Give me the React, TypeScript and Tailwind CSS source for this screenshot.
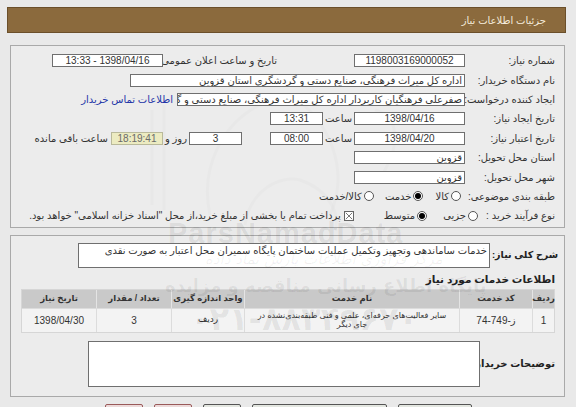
import React from "react";

const Box = ({ w, children, align = "center", className = "" }: { w: string; children?: React.ReactNode; align?: "center" | "right"; className?: string }) => (
  <div
    className={`${w} h-[13px] shrink-0 bg-white border border-[#6f6f6f] text-[10px] leading-[11px] text-[#333] overflow-hidden whitespace-nowrap ${align === "center" ? "text-center" : "text-right pr-[2px]"} ${className}`}
  >
    {children}
  </div>
);

const Label = ({ w, children, className = "" }: { w: string; children: React.ReactNode; className?: string }) => (
  <div className={`${w} shrink-0 text-[10px] text-[#333] whitespace-nowrap ${className}`}>{children}</div>
);

const Row = ({ children }: { children: React.ReactNode }) => (
  <div className="flex items-center h-[19.4px]">{children}</div>
);

const Radio = ({ checked = false }: { checked?: boolean }) => (
  <div className="w-[10px] h-[10px] shrink-0 rounded-full border border-[#555] bg-white flex items-center justify-center">
    {checked && <div className="w-[6px] h-[6px] rounded-full bg-black" />}
  </div>
);

export default function App() {
  return (
    <div
      dir="rtl"
      className="relative w-[576px] h-[407px] overflow-hidden bg-[#e9e9e9] font-['Liberation_Sans','DejaVu_Sans',sans-serif] text-[#333]"
    >
      {/* watermark logo (behind) */}
      <div className="pointer-events-none absolute inset-0 z-0">
        <svg className="absolute left-0 top-0" width="576" height="407" viewBox="0 0 576 407">
          <g fill="none" stroke="#000" strokeOpacity="0.08" strokeWidth="3">
            <path d="M152 110 L152 205 M164 105 L164 210" />
            <path d="M210 215 C200 170 220 120 270 100" />
            <path d="M330 215 C350 170 330 120 290 95" />
            <path d="M245 225 C250 190 280 175 300 180 C330 190 340 215 335 230" />
            <path d="M375 110 C395 115 400 135 390 160 L380 180" />
          </g>
        </svg>
      </div>

      <div className="relative z-10 pt-[7px]">
        {/* header */}
        <div className="mr-[10px] ml-[7px] h-[26px] bg-[#8b6a3d] border border-[#6b4f2a] flex items-center pr-[19px]">
          <span className="text-[10px] text-[#f4ecdc]">جزئیات اطلاعات نیاز</span>
        </div>

        {/* panel 1 */}
        <div className="mt-[12px] mr-[11px] ml-[10px] border border-[#a9a9a9] bg-[#ececec]/80 pt-[5px] pb-[1px] pr-[9px]">
          <Row>
            <Label w="w-[90px]">شماره نیاز:</Label>
            <Box w="w-[111px]">1198003169000052</Box>
            <Label w="w-[110px]" className="mr-[77px] text-[9.5px]">تاریخ و ساعت اعلان عمومی:</Label>
            <Box w="w-[111px]" className="mr-[4px]">1398/04/16 - 13:33</Box>
          </Row>
          <Row>
            <Label w="w-[90px]">نام دستگاه خریدار:</Label>
            <Box w="w-[335px]" align="right">اداره کل میراث فرهنگی، صنایع دستی و گردشگری استان قزوین</Box>
          </Row>
          <Row>
            <Label w="w-[90px]" className="text-[9.5px]">ایجاد کننده درخواست:</Label>
            <Box w="w-[288px]" align="right">صفرعلی فرهنگیان کاربردار اداره کل میراث فرهنگی، صنایع دستی و گردشگری ا</Box>
            <span className="mr-[4px] text-[10px] text-[#2436a8] whitespace-nowrap">اطلاعات تماس خریدار</span>
          </Row>
          <Row>
            <Label w="w-[90px]">تاریخ ایجاد نیاز:</Label>
            <Box w="w-[111px]">1398/04/16</Box>
            <Label w="w-[31px]" className="text-center">ساعت</Label>
            <Box w="w-[53px]">13:31</Box>
          </Row>
          <Row>
            <Label w="w-[90px]">تاریخ اعتبار نیاز:</Label>
            <Box w="w-[111px]">1398/04/20</Box>
            <Label w="w-[31px]" className="text-center">ساعت</Label>
            <Box w="w-[53px]">08:00</Box>
            <Box w="w-[53px]" className="mr-[28px]">3</Box>
            <Label w="w-[26px]" className="text-center">روز و</Label>
            <div className="w-[52px] h-[13px] shrink-0 bg-[#ecebc1] border border-[#b9b99a] text-[10px] leading-[11px] text-center text-[#6a6a6a]">18:19:41</div>
            <Label w="w-auto" className="mr-[3px]">ساعت باقی مانده</Label>
          </Row>
          <Row>
            <Label w="w-[90px]">استان محل تحویل:</Label>
            <Box w="w-[111px]" align="right">قزوین</Box>
          </Row>
          <Row>
            <Label w="w-[90px]">شهر محل تحویل:</Label>
            <Box w="w-[111px]" align="right">قزوین</Box>
          </Row>
          <Row>
            <Label w="w-[94px]" className="text-[9.5px]">طبقه بندی موضوعی:</Label>
            <Radio />
            <Label w="w-auto" className="mr-[2px]">کالا</Label>
            <div className="mr-[12px]"><Radio checked /></div>
            <Label w="w-auto" className="mr-[2px]">خدمت</Label>
            <div className="mr-[11px]"><Radio /></div>
            <Label w="w-auto" className="mr-[2px]">کالا/خدمت</Label>
          </Row>
          <Row>
            <Label w="w-[77px]" className="text-[9.5px]">نوع فرآیند خرید :</Label>
            <Radio />
            <Label w="w-auto" className="mr-[2px]">جزیی</Label>
            <div className="mr-[16px]"><Radio checked /></div>
            <Label w="w-auto" className="mr-[2px]">متوسط</Label>
            <div className="mr-[30px] w-[10px] h-[10px] shrink-0 border border-[#666] bg-white">
              <svg viewBox="0 0 10 10" className="w-full h-full block">
                <path d="M1 1 L9 9 M9 1 L1 9" stroke="#555" strokeWidth="1" />
              </svg>
            </div>
            <Label w="w-auto" className="mr-[3px]">پرداخت تمام یا بخشی از مبلغ خرید،از محل "اسناد خزانه اسلامی" خواهد بود.</Label>
          </Row>
        </div>

        {/* panel 2 */}
        <div className="mt-[7px] mr-[11px] ml-[10px] h-[162px] border border-[#a9a9a9] bg-[#ececec]/80 pt-[7px] pr-[6px]">
          <div className="flex items-center">
            <div className="w-[68px] shrink-0 text-[9.5px] font-bold text-[#222] whitespace-nowrap">شرح کلی نیاز:</div>
            <div className="w-[412px] h-[25px] shrink-0 bg-white border border-[#6f6f6f] text-[10px] leading-[14px] pr-[2px] text-right whitespace-nowrap overflow-hidden">
              خدمات ساماندهی وتجهیز وتکمیل عملیات ساختمان پایگاه سمیران محل اعتبار به صورت نقدی
            </div>
          </div>
          <div className="mt-[4px] h-[14px] pr-[3px] text-[10.5px] font-bold text-[#222] leading-[14px]">اطلاعات خدمات مورد نیاز</div>
          <div className="mt-[3px] mr-[3px] w-[534px] border border-[#d6d6d6]">
            <div className="grid grid-cols-[22px_73px_215px_73px_75px_74px] h-[18px] bg-[#c9c9c9] text-[8.5px] font-bold text-[#333] whitespace-nowrap">
              <div className="flex items-center justify-center border-l border-[#e4e4e4]">ردیف</div>
              <div className="flex items-center justify-center border-l border-[#e4e4e4]">کد خدمت</div>
              <div className="flex items-center justify-center border-l border-[#e4e4e4]">نام خدمت</div>
              <div className="flex items-center justify-center border-l border-[#e4e4e4]">واحد اندازه گیری</div>
              <div className="flex items-center justify-center border-l border-[#e4e4e4]">تعداد / مقدار</div>
              <div className="flex items-center justify-center">تاریخ نیاز</div>
            </div>
            <div className="grid grid-cols-[22px_73px_215px_73px_75px_74px] h-[24px] bg-[#f3f3f3] text-[10px] text-[#333] border-t border-[#dcdcdc]">
              <div className="flex items-center justify-center border-l border-[#dcdcdc]">1</div>
              <div className="flex items-center justify-center border-l border-[#dcdcdc]">ز-749-74</div>
              <div className="flex items-center justify-center text-center border-l border-[#dcdcdc] text-[8px] leading-[9px] px-[6px]">
                سایر فعالیت‌های حرفه‌ای، علمی و فنی طبقه‌بندی‌نشده در جای دیگر
              </div>
              <div className="flex items-center justify-center border-l border-[#dcdcdc] text-[9px]">ردیف</div>
              <div className="flex items-center justify-center border-l border-[#dcdcdc]">3</div>
              <div className="flex items-center justify-center">1398/04/30</div>
            </div>
          </div>
          <div className="mt-[8px] pr-[3px] flex items-center">
            <div className="w-[75px] shrink-0 text-[10px] font-bold text-[#222] whitespace-nowrap">توضیحات خریدار:</div>
            <div className="w-[392px] h-[46px] shrink-0 bg-white border border-[#6f6f6f]" />
          </div>
        </div>

        {/* buttons */}
        <div className="mt-[7px] mr-[104px] flex gap-[11px]">
          <div className="w-[74px] h-[20px] border border-[#555] bg-[#e3e6e0] rounded-[2px]" />
          <div className="w-[135px] h-[20px] border border-[#555] bg-[#e3e6e0] rounded-[2px]" />
          <div className="w-[38px] h-[20px] border border-[#555] bg-[#e3e6e0] rounded-[2px]" />
          <div className="w-[38px] h-[20px] border border-[#9a5a5a] bg-[#ecdada] rounded-[2px]" />
          <div className="w-[38px] h-[20px] border border-[#9a5a5a] bg-[#ecdada] rounded-[2px]" />
        </div>
      </div>

      {/* watermark texts (faint, over content) */}
      <div className="pointer-events-none absolute inset-0 z-20">
        <div className="absolute left-[168px] top-[220px] text-[29px] leading-[26px] font-bold text-black/[0.08] font-['Liberation_Sans',sans-serif] tracking-[1px]" dir="ltr">
          ParsNamadData
        </div>
        <div className="absolute left-[205px] top-[251px] text-[15px] leading-[17px] italic text-black/[0.06] font-['DejaVu_Sans',sans-serif] whitespace-nowrap">
          مرکز فراوری اطلاعات پارس نماد داده
        </div>
        <div className="absolute left-[165px] top-[276px] text-[18px] leading-[20px] font-bold text-black/[0.07] font-['DejaVu_Sans',sans-serif] whitespace-nowrap">
          پایگاه اطلاع رسانی مناقصه و مزایده
        </div>
        <div className="absolute left-[190px] top-[302px] text-[32px] leading-[34px] font-bold text-black/[0.07] font-['DejaVu_Sans',sans-serif] whitespace-nowrap" dir="ltr">
          ۰۲۱-۸۸۳۴۹۶۷۰
        </div>
      </div>
    </div>
  );
}
